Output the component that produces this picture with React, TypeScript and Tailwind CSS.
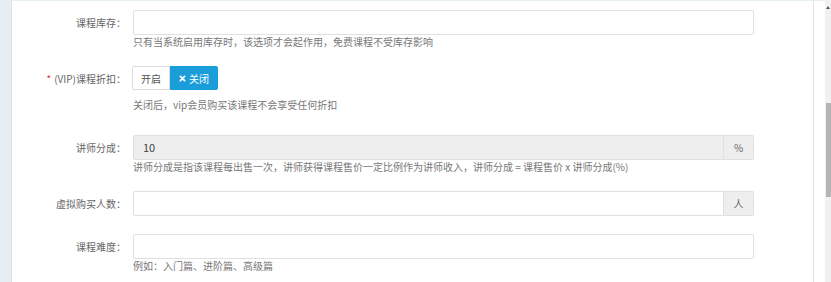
import React from "react";

const font = { fontFamily: '"Noto Sans CJK SC", "Noto Sans", sans-serif' };

function Label({ children, req }: { children: React.ReactNode; req?: boolean }) {
  return (
    <div className="w-[117px] shrink-0 text-right text-[10px] text-[#666] pr-[3px]">
      {req && <span className="text-[#e33] mr-[3px]">*</span>}
      {children}
    </div>
  );
}

function Help({ children }: { children: React.ReactNode }) {
  return (
    <div className="ml-[121px] text-[10px] leading-[14px] text-[#777]">{children}</div>
  );
}

export default function App() {
  return (
    <div className="w-[831px] h-[282px] overflow-hidden bg-[#e5eef3] flex" style={font}>
      <div className="w-[11px] shrink-0" />
      <div className="w-[803px] shrink-0 mt-[1px] bg-white border-l border-r border-[#e2e2e2] flex flex-col">
        {/* Row 1 */}
        <div className="flex items-center mt-[9px] h-[25px]">
          <Label>课程库存：</Label>
          <div className="w-[621px] h-[25px] ml-[4px] border border-[#e0e0e0] rounded-[2px] bg-white" />
        </div>
        <Help>只有当系统启用库存时，该选项才会起作用，免费课程不受库存影响</Help>

        {/* Row 2 */}
        <div className="flex items-center mt-[17px] h-[24px]">
          <Label req>(VIP)课程折扣：</Label>
          <div className="flex ml-[3px] h-[24px]">
            <div className="w-[38px] h-[24px] border border-[#dcdcdc] rounded-l-[2px] flex items-center justify-center text-[10px] text-[#555]">
              开启
            </div>
            <div className="w-[48px] h-[24px] bg-[#1b9dd9] rounded-r-[2px] flex items-center justify-center text-[10px] text-white gap-[3px]">
              <svg width="7" height="7" viewBox="0 0 10 10">
                <path d="M2 2L8 8M8 2L2 8" stroke="white" strokeWidth="2.6" strokeLinecap="round" />
              </svg>
              关闭
            </div>
          </div>
        </div>
        <div className="mt-[8px]">
          <Help>关闭后，vip会员购买该课程不会享受任何折扣</Help>
        </div>

        {/* Row 3 */}
        <div className="flex items-center mt-[23px] h-[25px]">
          <Label>讲师分成：</Label>
          <div className="flex ml-[4px] w-[621px] h-[25px]">
            <div className="flex-1 h-[25px] bg-[#eeeeee] border border-[#e0e0e0] rounded-l-[2px] flex items-center pl-[9px] text-[11px] text-[#444]">
              10
            </div>
            <div className="w-[30px] h-[25px] bg-[#eeeeee] border border-l-0 border-[#e0e0e0] rounded-r-[2px] flex items-center justify-center text-[10px] text-[#666]">
              %
            </div>
          </div>
        </div>
        <Help>讲师分成是指该课程每出售一次，讲师获得课程售价一定比例作为讲师收入，讲师分成 = 课程售价 x 讲师分成(%)</Help>

        {/* Row 4 */}
        <div className="flex items-center mt-[17px] h-[25px]">
          <Label>虚拟购买人数：</Label>
          <div className="flex ml-[4px] w-[621px] h-[25px]">
            <div className="flex-1 h-[25px] bg-white border border-[#e0e0e0] rounded-l-[2px]" />
            <div className="w-[30px] h-[25px] bg-[#eeeeee] border border-l-0 border-[#e0e0e0] rounded-r-[2px] flex items-center justify-center text-[10px] text-[#666]">
              人
            </div>
          </div>
        </div>

        {/* Row 5 */}
        <div className="flex items-center mt-[18px] h-[25px]">
          <Label>课程难度：</Label>
          <div className="w-[621px] h-[25px] ml-[4px] border border-[#e0e0e0] rounded-[2px] bg-white" />
        </div>
        <Help>例如：入门篇、进阶篇、高级篇</Help>
      </div>
      <div className="w-[11px] shrink-0 mt-[1px] bg-white" />
      <div className="w-[6px] shrink-0 bg-[#f1f1f1] flex flex-col items-center">
        <svg width="4" height="3" viewBox="0 0 4 3" className="mt-[6px]">
          <path d="M0 3L2 0L4 3Z" fill="#555" />
        </svg>
        <div className="w-[5px] h-[94px] mt-[94px] ml-[1px] bg-[#b5b5b5]" />
      </div>
    </div>
  );
}
